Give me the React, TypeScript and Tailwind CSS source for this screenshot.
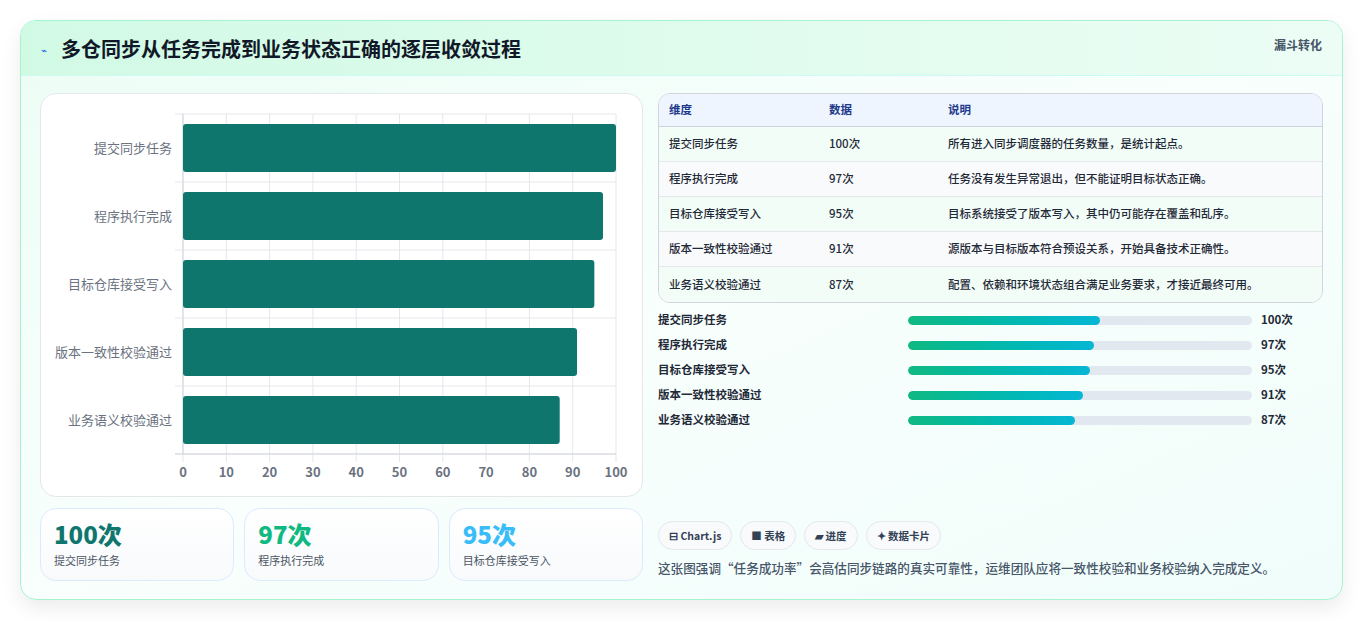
import React from "react";

const rows = [
  { name: "提交同步任务", value: 100, desc: "所有进入同步调度器的任务数量，是统计起点。" },
  { name: "程序执行完成", value: 97, desc: "任务没有发生异常退出，但不能证明目标状态正确。" },
  { name: "目标仓库接受写入", value: 95, desc: "目标系统接受了版本写入，其中仍可能存在覆盖和乱序。" },
  { name: "版本一致性校验通过", value: 91, desc: "源版本与目标版本符合预设关系，开始具备技术正确性。" },
  { name: "业务语义校验通过", value: 87, desc: "配置、依赖和环境状态组合满足业务要求，才接近最终可用。" },
];

const font = { fontFamily: '"Noto Sans CJK SC", "Noto Sans", sans-serif' };

const BarChart = () => {
  const x0 = 142, x1 = 575, y0 = 20, rowH = 68;
  const sx = (v: number) => x0 + ((x1 - x0) * v) / 100;
  return (
    <svg width="600" height="401" className="block">
      {Array.from({ length: 11 }).map((_, i) => (
        <line key={i} x1={sx(i * 10)} x2={sx(i * 10)} y1={y0} y2={y0 + rowH * 5 + 8} stroke="#e5e7eb" />
      ))}
      {Array.from({ length: 6 }).map((_, i) => (
        <line key={i} x1={x0 - 8} x2={x1} y1={y0 + i * rowH} y2={y0 + i * rowH} stroke="#e5e7eb" />
      ))}
      <line x1={x0} x2={x0} y1={y0} y2={y0 + rowH * 5} stroke="#d1d5db" />
      <line x1={x0 - 8} x2={x1} y1={y0 + rowH * 5} y2={y0 + rowH * 5} stroke="#d1d5db" />
      {rows.map((r, i) => (
        <g key={r.name}>
          <rect x={x0} y={y0 + i * rowH + 10} width={sx(r.value) - x0} height={48} rx={3} fill="#0f766e" />
          <text x={x0 - 11} y={y0 + i * rowH + 39} textAnchor="end" fontSize="13" fill="#6b7280" style={font}>
            {r.name}
          </text>
        </g>
      ))}
      {Array.from({ length: 11 }).map((_, i) => (
        <text key={i} x={sx(i * 10)} y={383} textAnchor="middle" fontSize="13" fontWeight="600" fill="#6b7280" style={font}>
          {i * 10}
        </text>
      ))}
    </svg>
  );
};

export default function App() {
  const stats = [
    { v: "100次", l: "提交同步任务", c: "text-[#0f766e]" },
    { v: "97次", l: "程序执行完成", c: "text-[#10b981]" },
    { v: "95次", l: "目标仓库接受写入", c: "text-[#38bdf8]" },
  ];
  return (
    <div className="w-[1363px] h-[621px] bg-white p-5" style={font}>
      <div className="rounded-2xl border border-[#a7f3d0] bg-gradient-to-br from-[#ecfdf5] via-[#f8fffd] to-[#f0fdfa] shadow-[0_8px_20px_rgba(0,0,0,0.08)] overflow-hidden h-[580px]">
        <div className="h-[55px] flex items-start justify-between px-5 pt-[13px] bg-gradient-to-r from-[#d1fae5] to-[#ecfdf5] border-b border-[#ccfbf1]">
          <div className="flex items-center gap-[10px]">
            <span className="text-[10px] text-[#2563eb]">⌁</span>
            <h1 className="text-[20px] font-bold text-[#111827] leading-[30px] ml-[4px]">多仓同步从任务完成到业务状态正确的逐层收敛过程</h1>
          </div>
          <span className="text-[12px] font-bold text-[#475569] mt-[2px]">漏斗转化</span>
        </div>
        <div className="flex gap-[15px] px-[19px] pt-[17px]">
          <div className="w-[603px] flex flex-col gap-[11px]">
            <div className="h-[404px] rounded-2xl border border-[#e5e7eb] bg-white">
              <BarChart />
            </div>
            <div className="flex gap-[10px]">
              {stats.map((s) => (
                <div key={s.l} className="w-[195px] h-[73px] rounded-2xl border border-[#dbeafe] bg-gradient-to-b from-white to-[#f8fafc] px-[13px] pt-[9px]">
                  <div className={`text-[24px] font-extrabold leading-[32px] ${s.c}`}>{s.v}</div>
                  <div className="text-[11px] text-[#4b5563] mt-[2px]">{s.l}</div>
                </div>
              ))}
            </div>
          </div>
          <div className="w-[667px] flex flex-col">
            <div className="rounded-xl border border-[#d1d5db] overflow-hidden bg-white">
              <div className="flex h-[33px] items-center bg-[#eef5ff] border-b border-[#cbd5e1] text-[11.5px] font-bold text-[#1e3a8a]">
                <div className="w-[170px] pl-[10px]">维度</div>
                <div className="w-[119px]">数据</div>
                <div>说明</div>
              </div>
              {rows.map((r, i) => (
                <div key={r.name} className={`flex h-[35px] items-center text-[11.5px] font-medium text-[#1f2937] ${i < 4 ? "border-b border-[#e5e7eb]" : ""} ${i % 2 === 0 ? "bg-[#f3fdf8]" : "bg-[#f9fafb]"}`}>
                  <div className="w-[170px] pl-[10px]">{r.name}</div>
                  <div className="w-[119px]">{r.value}次</div>
                  <div>{r.desc}</div>
                </div>
              ))}
            </div>
            <div className="flex flex-col gap-[7px] mt-[8px]">
              {rows.map((r) => (
                <div key={r.name} className="flex items-center h-[18px] text-[11.5px] font-bold text-[#1f2937]">
                  <div className="w-[250px]">{r.name}</div>
                  <div className="w-[344px] h-[9px] rounded-full bg-[#e2e8f0] overflow-hidden">
                    <div className="h-full rounded-full bg-gradient-to-r from-[#10b981] to-[#06b6d4]" style={{ width: `${r.value * 0.558}%` }} />
                  </div>
                  <div className="ml-[9px]">{r.value}次</div>
                </div>
              ))}
            </div>
            <div className="flex gap-[8px] mt-[92px]">
              {["⊟ Chart.js", "■ 表格", "▰ 进度", "✦ 数据卡片"].map((c) => (
                <span key={c} className="h-[29px] px-[10px] flex items-center rounded-full border border-[#e5e7eb] bg-[#f8fafc] text-[10.5px] font-bold text-[#334155]">
                  {c}
                </span>
              ))}
            </div>
            <p className="mt-[9px] text-[12.6px] font-medium text-[#475569]">这张图强调“任务成功率”会高估同步链路的真实可靠性，运维团队应将一致性校验和业务校验纳入完成定义。</p>
          </div>
        </div>
      </div>
    </div>
  );
}
